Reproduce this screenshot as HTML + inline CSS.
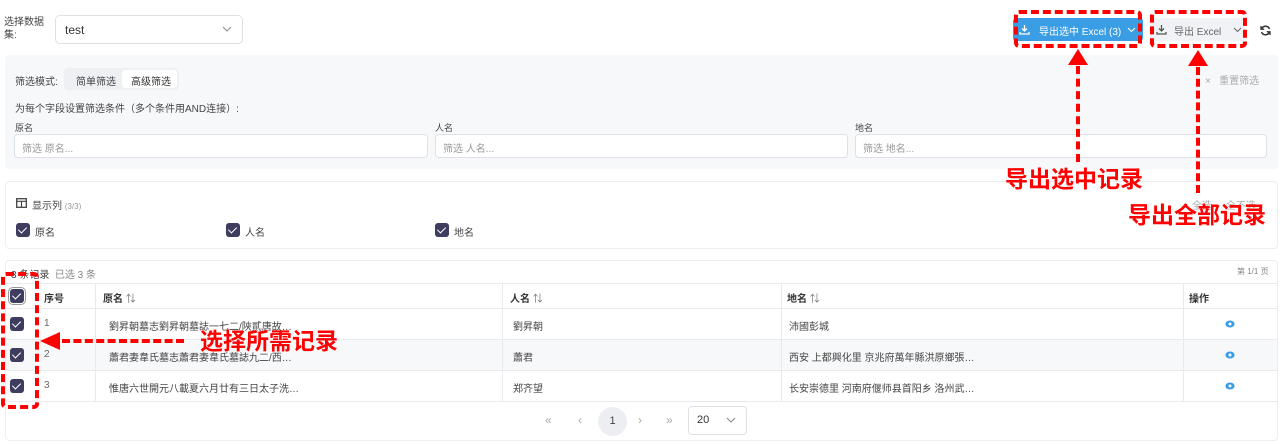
<!DOCTYPE html>
<html><head><meta charset="utf-8"><style>
*{box-sizing:border-box;margin:0;padding:0}
body{width:1280px;height:444px;overflow:hidden;background:#fff;font-family:"Liberation Sans","Noto Sans CJK SC",sans-serif;color:#333;position:relative}
.a{position:absolute}
.t{font-size:10px;color:#444}
.inp{position:absolute;height:24px;border:1px solid #dde1e6;border-radius:4px;background:#fff;font-size:10px;color:#999;padding:5px 7px}
.cb{position:absolute;width:14px;height:14px;background:#3f3d5f;border-radius:3px}
.cb:after{content:"";position:absolute;left:4px;top:2px;width:4px;height:7px;border:solid #fff;border-width:0 1.3px 1.3px 0;transform:rotate(45deg)}
.red{position:absolute;border:4px dashed #f00;border-radius:5px}
.rt{position:absolute;color:#f00;font-weight:bold;font-size:23px;font-family:"Noto Sans CJK SC",sans-serif;white-space:nowrap;line-height:28px}
.vl{position:absolute;width:0;border-left:4px dashed #f00}
.tri-up{position:absolute;width:0;height:0;border-left:10px solid transparent;border-right:10px solid transparent;border-bottom:16px solid #f00}
.cell{position:absolute;font-size:10px;color:#444;white-space:nowrap}
.hl{position:absolute;height:1px;background:#e8eaee}
.vline{position:absolute;width:1px;background:#e8eaee}
.pg{position:absolute;top:410px;font-size:12px;color:#aaa;line-height:20px}
</style></head><body>

<div class="a t" style="left:4px;top:16px;line-height:13px;font-size:10px">选择数据<br>集:</div>
<div class="a" style="left:55px;top:15px;width:188px;height:29px;border:1px solid #dde1e6;border-radius:5px;font-size:12px;padding:7px 9px;color:#333">test
<svg class="a" style="left:166px;top:10px" width="10" height="7"><path d="M1 1L5 5L9 1" fill="none" stroke="#888" stroke-width="1"/></svg></div>

<div class="a" style="left:1013px;top:18px;width:130px;height:23px;background:#3b9de3;border-radius:3px;color:#fff;font-size:10px;padding:5px 0 0 26px">导出选中 Excel (3)</div>
<svg class="a" style="left:1019px;top:24px" width="11" height="11"><path d="M5.5 1V7M3 4.5L5.5 7L8 4.5M1 8V10H10V8" fill="none" stroke="#fff" stroke-width="1.3"/></svg>
<svg class="a" style="left:1127px;top:27px" width="9" height="6"><path d="M1 1L4.5 4.5L8 1" fill="none" stroke="#fff" stroke-width="1"/></svg>
<div class="a" style="left:1150px;top:18px;width:95px;height:23px;background:#f0f2f5;border-radius:3px;color:#666;font-size:10px;padding:5px 0 0 24px">导出 Excel</div>
<svg class="a" style="left:1156px;top:24px" width="11" height="11"><path d="M5.5 1V7M3 4.5L5.5 7L8 4.5M1 8V10H10V8" fill="none" stroke="#555" stroke-width="1.3"/></svg>
<svg class="a" style="left:1233px;top:27px" width="9" height="6"><path d="M1 1L4.5 4.5L8 1" fill="none" stroke="#666" stroke-width="1"/></svg>
<svg class="a" style="left:1260px;top:25px" width="11" height="11"><path d="M9.5 4A4.2 4.2 0 0 0 1.8 3.5M1.5 7A4.2 4.2 0 0 0 9.2 7.5" fill="none" stroke="#333" stroke-width="1.5"/><path d="M1 1V4.2H4.2M10 10V6.8H6.8" fill="none" stroke="#333" stroke-width="1.3"/></svg>

<div class="a" style="left:5px;top:55px;width:1273px;height:114px;background:#f7f8fa;border-radius:4px"></div>
<div class="a t" style="left:15px;top:73px">筛选模式:</div>
<div class="a" style="left:64px;top:68px;width:115px;height:22px;background:#eef0f4;border-radius:4px"></div>
<div class="a t" style="left:76px;top:73px">简单筛选</div>
<div class="a" style="left:122px;top:70px;width:55px;height:18px;background:#fff;border-radius:3px;font-size:10px;color:#333;padding:3px 0 0 9px">高级筛选</div>
<div class="a" style="left:1205px;top:72px;font-size:10px;color:#aaa">×&nbsp;&nbsp; 重置筛选</div>
<div class="a t" style="left:15px;top:100px">为每个字段设置筛选条件（多个条件用AND连接）:</div>
<div class="a t" style="left:15px;top:121px;font-size:9px">原名</div>
<div class="a t" style="left:435px;top:121px;font-size:9px">人名</div>
<div class="a t" style="left:855px;top:121px;font-size:9px">地名</div>
<div class="inp" style="left:14px;top:134px;width:414px">筛选 原名...</div>
<div class="inp" style="left:435px;top:134px;width:413px">筛选 人名...</div>
<div class="inp" style="left:855px;top:134px;width:412px">筛选 地名...</div>

<div class="a" style="left:5px;top:181px;width:1273px;height:68px;border:1px solid #eceef2;border-radius:4px"></div>
<svg class="a" style="left:16px;top:198px" width="11" height="10"><rect x="0.7" y="0.7" width="9.6" height="8.6" fill="none" stroke="#444" stroke-width="1.3"/><path d="M1 3.3H10M5.5 3V9" stroke="#444" stroke-width="1.2"/></svg>
<div class="a t" style="left:32px;top:197px">显示列 <span style="font-size:8px;color:#999">(3/3)</span></div>
<div class="a" style="left:1192px;top:197px;font-size:10px;color:#aaa">全选 &nbsp;&nbsp;&nbsp; 全不选</div>
<div class="cb" style="left:16px;top:223px"></div><div class="a t" style="left:35px;top:224px">原名</div>
<div class="cb" style="left:226px;top:223px"></div><div class="a t" style="left:245px;top:224px">人名</div>
<div class="cb" style="left:435px;top:223px"></div><div class="a t" style="left:454px;top:224px">地名</div>

<div class="a" style="left:5px;top:260px;width:1273px;height:181px;border:1px solid #eceef2;border-radius:4px"></div>
<div class="a" style="left:11px;top:266px;font-size:10px;color:#444">3 条记录 &nbsp;<span style="color:#888">已选 3 条</span></div>
<div class="a" style="left:1237px;top:266px;font-size:8px;color:#888">第 1/1 页</div>
<div class="hl" style="left:6px;top:283px;width:1271px"></div>
<div class="hl" style="left:6px;top:308px;width:1271px"></div>
<div class="a" style="left:6px;top:339px;width:1271px;height:31px;background:#f7f8fa"></div>
<div class="hl" style="left:6px;top:339px;width:1271px"></div>
<div class="hl" style="left:6px;top:370px;width:1271px"></div>
<div class="hl" style="left:6px;top:401px;width:1271px"></div>
<div class="vline" style="left:95px;top:283px;height:118px"></div>
<div class="vline" style="left:502px;top:283px;height:118px"></div>
<div class="vline" style="left:781px;top:283px;height:118px"></div>
<div class="vline" style="left:1183px;top:283px;height:118px"></div>
<div class="cb" style="left:10px;top:289px;outline:1px solid #999;outline-offset:1px"></div>
<div class="cell" style="left:44px;top:290px;font-weight:bold;color:#333">序号</div>
<div class="cell" style="left:103px;top:290px;font-weight:bold;color:#333">原名 <span style="font-weight:normal;color:#777">⇅</span></div>
<div class="cell" style="left:510px;top:290px;font-weight:bold;color:#333">人名 <span style="font-weight:normal;color:#777">⇅</span></div>
<div class="cell" style="left:787px;top:290px;font-weight:bold;color:#333">地名 <span style="font-weight:normal;color:#777">⇅</span></div>
<div class="cell" style="left:1189px;top:290px;font-weight:bold;color:#333">操作</div>

<div class="cb" style="left:10px;top:317px"></div>
<div class="cell" style="left:44px;top:318px;color:#666">1</div>
<div class="cell" style="left:109px;top:318px">劉昇朝墓志劉昇朝墓誌一七二/陝貳唐故…</div>
<div class="cell" style="left:513px;top:318px">劉昇朝</div>
<div class="cell" style="left:789px;top:318px">沛國彭城</div>
<div class="cb" style="left:10px;top:348px"></div>
<div class="cell" style="left:44px;top:349px;color:#666">2</div>
<div class="cell" style="left:109px;top:349px">蕭君妻韋氏墓志蕭君妻韋氏墓誌九二/西…</div>
<div class="cell" style="left:513px;top:349px">蕭君</div>
<div class="cell" style="left:789px;top:349px">西安 上都興化里 京兆府萬年縣洪原鄉張…</div>
<div class="cb" style="left:10px;top:379px"></div>
<div class="cell" style="left:44px;top:380px;color:#666">3</div>
<div class="cell" style="left:109px;top:380px">惟唐六世開元八載夏六月廿有三日太子洗…</div>
<div class="cell" style="left:513px;top:380px">郑齐望</div>
<div class="cell" style="left:789px;top:380px">长安崇德里 河南府偃师县首阳乡 洛州武…</div>
<svg class="a" style="left:1225px;top:320px" width="10" height="8"><ellipse cx="5" cy="4" rx="4.6" ry="3.5" fill="#3b9de3"/><circle cx="5" cy="4" r="1.5" fill="#fff"/></svg>
<svg class="a" style="left:1225px;top:351px" width="10" height="8"><ellipse cx="5" cy="4" rx="4.6" ry="3.5" fill="#3b9de3"/><circle cx="5" cy="4" r="1.5" fill="#fff"/></svg>
<svg class="a" style="left:1225px;top:382px" width="10" height="8"><ellipse cx="5" cy="4" rx="4.6" ry="3.5" fill="#3b9de3"/><circle cx="5" cy="4" r="1.5" fill="#fff"/></svg>

<div class="pg" style="left:545px">«</div>
<div class="pg" style="left:578px">‹</div>
<div class="a" style="left:598px;top:407px;width:29px;height:29px;border-radius:50%;background:#eceef2;font-size:11px;color:#444;text-align:center;line-height:29px">1</div>
<div class="pg" style="left:638px">›</div>
<div class="pg" style="left:666px">»</div>
<div class="a" style="left:688px;top:406px;width:59px;height:29px;border:1px solid #dde1e6;border-radius:4px;font-size:11px;color:#333;padding:7px 8px">20</div>
<svg class="a" style="left:726px;top:417px" width="10" height="7"><path d="M1 1L5 5L9 1" fill="none" stroke="#888" stroke-width="1"/></svg>

<div class="red" style="left:1014px;top:10px;width:128px;height:38px"></div>
<div class="red" style="left:1150px;top:10px;width:97px;height:38px"></div>
<div class="tri-up" style="left:1068px;top:49px"></div>
<div class="vl" style="left:1076px;top:66px;height:96px"></div>
<div class="rt" style="left:1005px;top:163px">导出选中记录</div>
<div class="tri-up" style="left:1188px;top:50px"></div>
<div class="vl" style="left:1196px;top:67px;height:126px"></div>
<div class="rt" style="left:1128px;top:199px">导出全部记录</div>
<div class="red" style="left:1px;top:272px;width:38px;height:137px"></div>
<div class="a" style="left:40px;top:332px;width:0;height:0;border-top:9px solid transparent;border-bottom:9px solid transparent;border-right:20px solid #f00"></div>
<div class="a" style="left:62px;top:339px;width:122px;border-top:4px dashed #f00"></div>
<div class="rt" style="left:200px;top:325px">选择所需记录</div>
</body></html>
